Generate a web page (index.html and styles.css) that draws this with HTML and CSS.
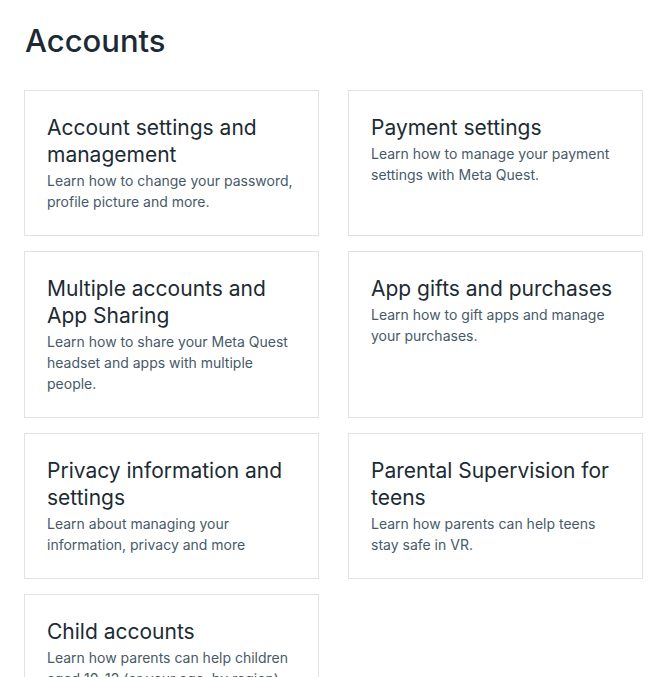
FILE: index.html
```html
<!DOCTYPE html>
<html lang="en">
<head>
<meta charset="utf-8">
<link rel="stylesheet" href="styles.css">
</head>
<body>
<main class="page">
  <h1 class="page-title">Accounts</h1>
  <div class="grid">
    <a class="card" href="#">
      <h2 class="card-title">Account settings and management</h2>
      <p class="card-desc">Learn how to change your password, profile picture and more.</p>
    </a>
    <a class="card" href="#">
      <h2 class="card-title">Payment settings</h2>
      <p class="card-desc">Learn how to manage your payment settings with Meta Quest.</p>
    </a>
    <a class="card" href="#">
      <h2 class="card-title">Multiple accounts and App Sharing</h2>
      <p class="card-desc">Learn how to share your Meta Quest headset and apps with multiple people.</p>
    </a>
    <a class="card" href="#">
      <h2 class="card-title">App gifts and purchases</h2>
      <p class="card-desc">Learn how to gift apps and manage your purchases.</p>
    </a>
    <a class="card" href="#">
      <h2 class="card-title">Privacy information and settings</h2>
      <p class="card-desc">Learn about managing your information, privacy and more</p>
    </a>
    <a class="card" href="#">
      <h2 class="card-title">Parental Supervision for teens</h2>
      <p class="card-desc">Learn how parents can help teens stay safe in VR.</p>
    </a>
    <a class="card" href="#">
      <h2 class="card-title">Child accounts</h2>
      <p class="card-desc">Learn how parents can help children aged 10-12 (or your age, by region) have a safe experience.</p>
    </a>
  </div>
</main>
</body>
</html>
```

FILE: styles.css
```css
* { box-sizing: border-box; }
html, body { margin: 0; padding: 0; background: #fff; }
body {
  font-family: Inter, "Noto Sans", "Liberation Sans", sans-serif;
  color: #1c2b33;
}
.page {
  padding: 21px 22px 0 24px;
}
.page-title {
  margin: 0 0 29px 1px;
  font-size: 31px;
  font-weight: 500;
  line-height: 40px;
  color: #1c2b33;
}
.grid {
  display: grid;
  grid-template-columns: 295px 295px;
  column-gap: 29px;
  row-gap: 15px;
  align-items: stretch;
}
.card {
  display: block;
  border: 1px solid #dee3e9;
  padding: 23px 22px 23px 22px;
  text-decoration: none;
  color: inherit;
}
.card-title {
  margin: 0 0 2px;
  font-size: 21px;
  font-weight: 400;
  line-height: 27px;
  color: #1c2b33;
}
.card-desc {
  margin: 0;
  font-size: 14px;
  line-height: 21px;
  color: #465a69;
}
```
